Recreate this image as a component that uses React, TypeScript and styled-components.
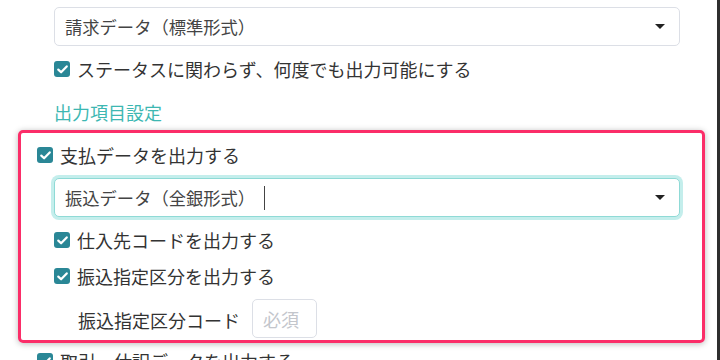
import React from "react";
import styled, { createGlobalStyle } from "styled-components";

const Global = createGlobalStyle`
  html, body { margin: 0; padding: 0; background: #ffffff; }
  body { font-family: "Noto Sans CJK JP", "Noto Sans", sans-serif; color: #333; }
`;

const Page = styled.div`
  width: 720px;
  height: 360px;
  box-sizing: border-box;
  border-right: 3px solid #2e2e2e;
  overflow: hidden;
  padding-top: 7px;
  display: flex;
  flex-direction: column;
`;

const Indent = styled.div<{ $left: number; $right: number }>`
  padding-left: ${(p) => p.$left}px;
  padding-right: ${(p) => p.$right}px;
  display: flex;
  flex-direction: column;
`;

const SelectBox = styled.div<{ $focus?: boolean; $mt?: number }>`
  height: 39px;
  box-sizing: border-box;
  border: 1px solid ${(p) => (p.$focus ? "#8fdad6" : "#dcdfe6")};
  border-radius: 5px;
  box-shadow: ${(p) => (p.$focus ? "0 0 0 3px #c4eeec" : "none")};
  margin-top: ${(p) => p.$mt ?? 0}px;
  display: flex;
  align-items: center;
  padding: 0 14px 0 10px;
  font-size: 17.3px;
  color: #444;
  background: #fff;
`;

const SelectText = styled.span`
  display: flex;
  align-items: center;
  flex: 1;
  white-space: nowrap;
`;

const Cursor = styled.span`
  display: inline-block;
  width: 1px;
  height: 24px;
  background: #444;
  margin-left: 9px;
`;

const Caret = styled.span`
  width: 0;
  height: 0;
  border-left: 5px solid transparent;
  border-right: 5px solid transparent;
  border-top: 5px solid #222;
`;

const Row = styled.label<{ $mt?: number }>`
  display: flex;
  align-items: center;
  gap: 7px;
  height: 24px;
  margin-top: ${(p) => p.$mt ?? 0}px;
  font-size: 18px;
  color: #333;
  white-space: nowrap;
`;

const Check = styled.span`
  width: 16px;
  height: 16px;
  border-radius: 3px;
  background: #2a8796;
  display: flex;
  align-items: center;
  justify-content: center;
  flex-shrink: 0;
`;

const Heading = styled.div`
  margin-top: 19px;
  height: 24px;
  line-height: 24px;
  font-size: 18px;
  color: #3db7b2;
`;

const Highlight = styled.div`
  margin: 6px 12px 0 18px;
  border: 3px solid #fb2d68;
  border-radius: 5px;
  box-shadow: 0 1px 6px rgba(0, 0, 0, 0.28);
  padding: 10px 22px 2px 16px;
  display: flex;
  flex-direction: column;
`;

const Nested = styled.div`
  padding-left: 17px;
  display: flex;
  flex-direction: column;
`;

const CodeRow = styled.div`
  display: flex;
  align-items: center;
  margin-top: 11px;
  padding-left: 41px;
  gap: 12px;
`;

const CodeLabel = styled.span`
  font-size: 18px;
  color: #333;
  white-space: nowrap;
  margin-top: 3px;
`;

const SmallInput = styled.div`
  width: 65px;
  height: 39px;
  box-sizing: border-box;
  border: 1px solid #dcdfe6;
  border-radius: 5px;
  display: flex;
  align-items: center;
  padding-left: 10px;
  font-size: 18px;
  color: #c3c6cc;
`;

const CheckBox = () => (
  <Check>
    <svg width="11" height="9" viewBox="0 0 11 9">
      <path d="M1.3 4.6 L4.1 7.3 L9.7 1.4" fill="none" stroke="#fff" strokeWidth="2.2" strokeLinecap="round" strokeLinejoin="round" />
    </svg>
  </Check>
);

export default function App() {
  return (
    <>
      <Global />
      <Page>
        <Indent $left={54} $right={37}>
          <SelectBox>
            <SelectText>請求データ（標準形式）</SelectText>
            <Caret />
          </SelectBox>
          <Row $mt={11}>
            <CheckBox />
            ステータスに関わらず、何度でも出力可能にする
          </Row>
          <Heading>出力項目設定</Heading>
        </Indent>
        <Highlight>
          <Row>
            <CheckBox />
            支払データを出力する
          </Row>
          <Nested>
            <SelectBox $focus $mt={11}>
              <SelectText>
                振込データ（全銀形式）
                <Cursor />
              </SelectText>
              <Caret />
            </SelectBox>
            <Row $mt={11}>
              <CheckBox />
              仕入先コードを出力する
            </Row>
            <Row $mt={12}>
              <CheckBox />
              振込指定区分を出力する
            </Row>
          </Nested>
          <CodeRow>
            <CodeLabel>振込指定区分コード</CodeLabel>
            <SmallInput>必須</SmallInput>
          </CodeRow>
        </Highlight>
        <Indent $left={37} $right={0}>
          <Row $mt={6}>
            <CheckBox />
            取引・仕訳データを出力する
          </Row>
        </Indent>
      </Page>
    </>
  );
}
